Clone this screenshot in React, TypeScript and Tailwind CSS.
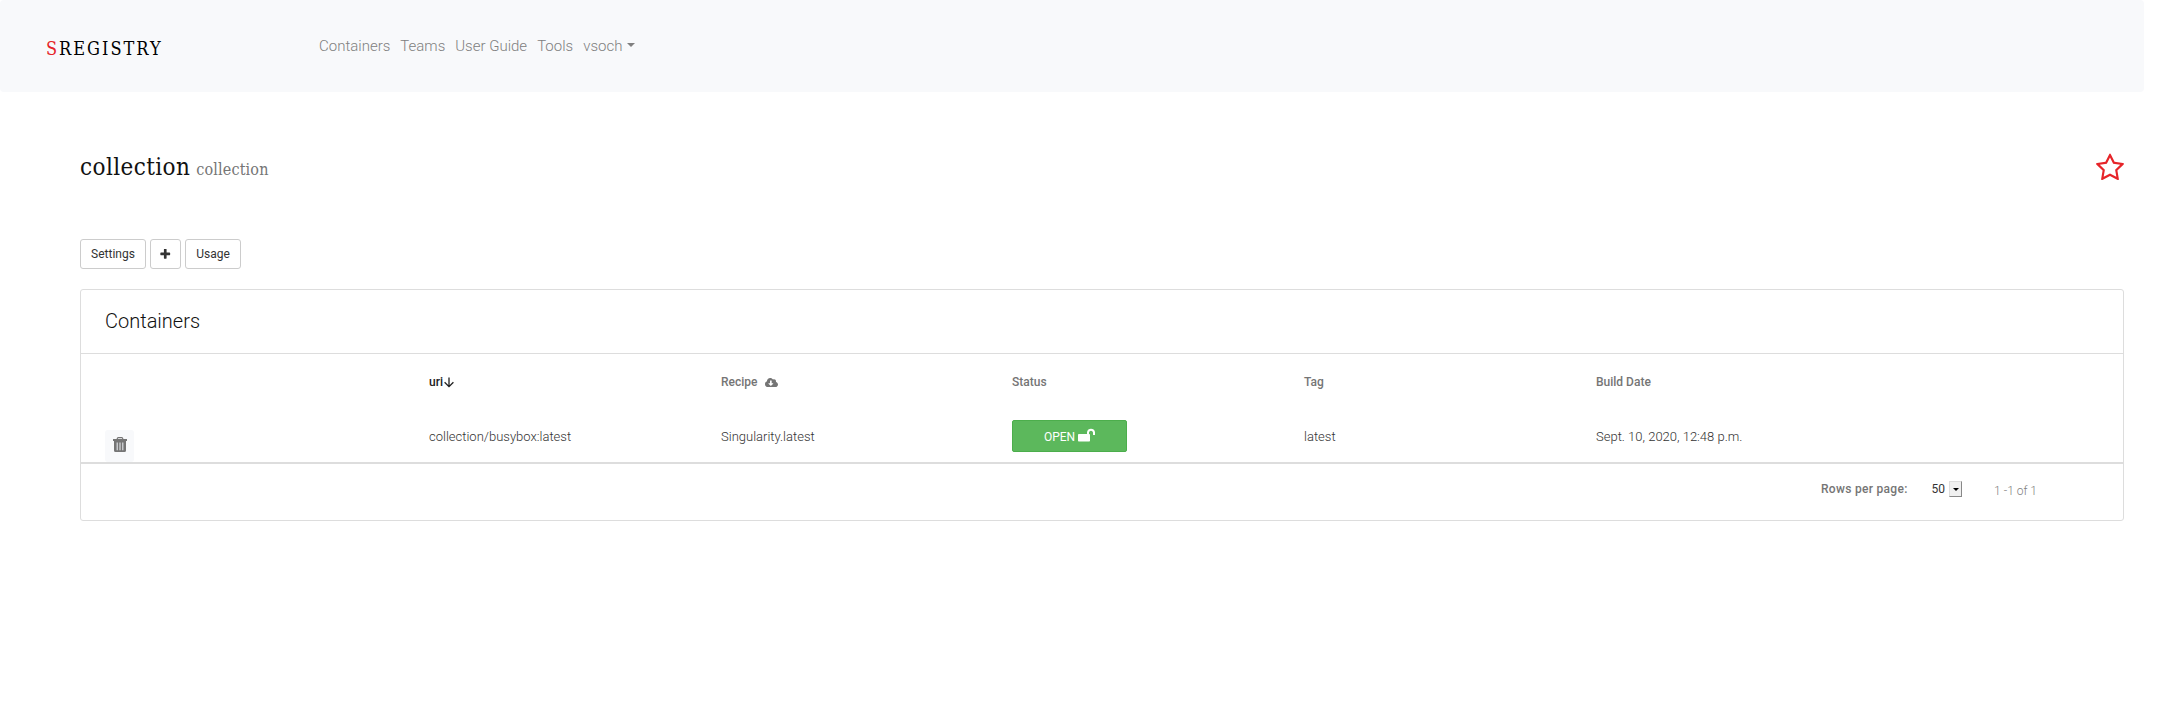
import React from "react";
import { FaCloudDownloadAlt } from "react-icons/fa";

const navItems = ["Containers", "Teams", "User Guide", "Tools"];

function StarIcon() {
  return (
    <svg viewBox="0 0 1664 1792" className="mt-[4px] h-[30px] w-[28px]" fill="#e62429">
      <path d="M1137 1004l306-297-422-62-189-382-189 382-422 62 306 297-73 421 378-199 377 199zm527-357q0 22-26 48l-363 354 86 500q1 7 1 20 0 50-41 50-19 0-40-12l-449-236-449 236q-22 12-40 12-21 0-31.5-14.5t-10.5-35.5q0-6 2-20l86-500-364-354q-25-27-25-48 0-37 56-46l502-73 225-455q19-41 49-41t49 41l225 455 502 73q56 9 56 46z" />
    </svg>
  );
}

function PlusIcon() {
  return (
    <svg viewBox="0 0 1792 1792" className="size-[12.5px]" fill="#333">
      <path d="M1600 736v192q0 40-28 68t-68 28h-416v416q0 40-28 68t-68 28h-192q-40 0-68-28t-28-68v-416h-416q-40 0-68-28t-28-68v-192q0-40 28-68t68-28h416v-416q0-40 28-68t68-28h192q40 0 68 28t28 68v416h416q40 0 68 28t28 68z" />
    </svg>
  );
}

function TrashIcon() {
  return (
    <svg viewBox="0 0 14 15" className="h-[15px] w-[14px]">
      <path d="M4.3 2.2V1.6Q4.3.6 5.3.6h3.4q1 0 1 1v.6" fill="none" stroke="#757575" strokeWidth="1.2" />
      <path d="M0 2h14v1.9H0zM1 3.900h12v9.500Q13 15 11.500 15h-9Q1 15 1 13.400z" fill="#757575" />
      <path d="M4.200 5.500v7.800M7 5.500v7.800M9.800 5.500v7.800" stroke="#e3e6ea" strokeWidth="1.100" />
    </svg>
  );
}

function UnlockIcon() {
  return (
    <svg viewBox="0 0 17 15" className="mb-[4px] h-[15px] w-[17px]">
      <path d="M10 8V5.300a3.100 3.300 0 0 1 6 0V8" fill="none" stroke="#fff" strokeWidth="2" />
      <rect x="0" y="7" width="12" height="7.500" rx="0.800" fill="#fff" />
    </svg>
  );
}

function Navbar() {
  return (
    <nav className="flex h-[92px] w-[2144px] rounded-[4px] bg-[#f8f9fb] pl-[46px]">
      <div className="mt-[36px] w-[273px] font-['Roboto_Slab','DejaVu_Serif_Condensed','DejaVu_Serif',serif] text-[18px] leading-[26px] tracking-[2px] text-black">
        <span className="text-[#e62429]">S</span>REGISTRY
      </div>
      <ul className="mt-[34px] flex h-[24px] gap-[10px] text-[15px] leading-[24px] font-light text-[#808080]">
        {navItems.map((item) => (
          <li key={item}>{item}</li>
        ))}
        <li className="flex items-center gap-[5px]">
          vsoch
          <span className="mb-[2px] border-x-[4px] border-t-[4px] border-x-transparent border-t-[#808080]" />
        </li>
      </ul>
    </nav>
  );
}

function SmallButton({ children, className }: { children: React.ReactNode; className: string }) {
  return (
    <button
      className={
        "flex h-[30px] items-center justify-center rounded-[3px] border border-[#ccc] bg-white text-[12px] text-[#333] " +
        className
      }
    >
      {children}
    </button>
  );
}

export default function App() {
  return (
    <div className="h-[718px] w-full bg-white font-['Roboto',sans-serif]">
      <Navbar />
      <main className="ml-[80px] w-[2044px]">
        <header className="flex h-[93px] items-start justify-between pt-[57px] font-['Roboto_Slab','DejaVu_Serif_Condensed','DejaVu_Serif',serif]">
          <h1 className="flex items-baseline text-[24px] leading-[36px] tracking-[0.4px] text-[#111]">
            collection
            <small className="ml-[6px] text-[16px] tracking-[0.15px] text-[#757575]">collection</small>
          </h1>
          <StarIcon />
        </header>
        <div className="mt-[54px] flex gap-[4px]">
          <SmallButton className="w-[66px]">Settings</SmallButton>
          <SmallButton className="w-[31px]">
            <PlusIcon />
          </SmallButton>
          <SmallButton className="w-[56px]">Usage</SmallButton>
        </div>
        <section className="mt-[20px] h-[232px] rounded-[3px] border border-[#ddd]">
          <h2 className="h-[64px] border-b border-[#ddd] pt-[17px] pl-[24px] text-[20px] leading-[28px] font-light text-[#111]">
            Containers
          </h2>
          <div className="flex h-[56px] items-center pl-[348px] text-[12px] font-medium text-[#757575]">
            <span className="flex w-[292px] items-center gap-px text-[#212121]">
              uri
              <svg viewBox="0 0 10 11" className="h-[11px] w-[10px]" fill="none" stroke="#212121" strokeWidth="1.3">
                <path d="M5 0.500v9M0.600 5.200L5 9.600l4.400-4.400" />
              </svg>
            </span>
            <span className="flex w-[291px] items-center gap-[8px]">
              Recipe <FaCloudDownloadAlt className="size-[13px]" />
            </span>
            <span className="w-[292px]">Status</span>
            <span className="w-[292px]">Tag</span>
            <span>Build Date</span>
          </div>
          <div className="flex h-[54px] items-center border-b-2 border-[#ddd] pl-[24px] text-[13px] font-light text-[#333]">
            <button className="mr-[295px] flex h-[32px] w-[29px] items-start justify-center self-end rounded-[3px] bg-[#f8f9fb] pt-[7px] pl-px">
              <TrashIcon />
            </button>
            <span className="w-[292px] pt-[2px]">collection/busybox:latest</span>
            <span className="w-[291px] pt-[2px]">Singularity.latest</span>
            <span className="w-[292px]">
              <button className="flex h-[32px] w-[115px] items-center justify-center gap-[3px] rounded-[2px] border border-[#4cae4c] bg-[#5cb85c] pt-px text-[12px] font-normal text-white">
                OPEN
                <UnlockIcon />
              </button>
            </span>
            <span className="w-[292px] pt-[2px]">latest</span>
            <span className="pt-[2px]">Sept. 10, 2020, 12:48 p.m.</span>
          </div>
          <div className="flex h-[50px] items-center justify-end pr-[86px] text-[12px]">
            <span className="mr-[24px] font-medium tracking-[0.3px] text-[#757575]">Rows per page:</span>
            <span className="mr-[4px] text-[#333]">50</span>
            <span className="mr-[32px] flex h-[16px] w-[13px] items-center justify-center border border-t-[#ddd] border-r-[#888] border-b-[#888] border-l-[#ddd] bg-[#f0f0f0]">
              <span className="border-x-[3px] border-t-[3px] border-x-transparent border-t-black" />
            </span>
            <span className="pt-[3px] font-light text-[#808080]">1 -1 of 1</span>
          </div>
        </section>
      </main>
    </div>
  );
}
